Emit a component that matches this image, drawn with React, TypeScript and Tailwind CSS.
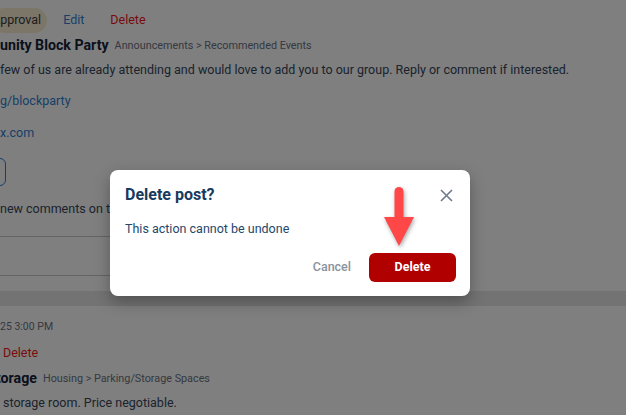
import React from "react";

const PostMeta = () => {
  return (
    <div className="pt-[8px]">
      <div className="flex h-[25px] items-center text-[12.5px]">
        <span className="-ml-[8px] flex h-[25px] items-center rounded-full bg-[#f9edd3] pr-[6px] text-[#3a3a3a]">
          Approval
        </span>
        <button className="ml-[16px] text-[#2f7fd0]">Edit</button>
        <button className="ml-[26px] text-[#f01818]">Delete</button>
      </div>
      <div className="mt-[1px] flex h-[24px] items-center gap-[6px]">
        <h3 className="text-[14.2px] font-bold text-[#152238]">unity Block Party</h3>
        <span className="text-[10.8px] text-[#6b7280]">
          Announcements &gt; Recommended Events
        </span>
      </div>
      <p className="flex h-[24px] items-center text-[12.5px] text-[#36465a]">
        few of us are already attending and would love to add you to our group. Reply or comment if interested.
      </p>
      <a className="mt-[7px] flex h-[24px] items-center text-[12.5px] text-[#2f7fd0]">g/blockparty</a>
      <a className="mt-[8px] flex h-[24px] items-center text-[12.5px] text-[#2f7fd0]">x.com</a>
      <button className="-ml-[90px] mt-[13px] block h-[28px] w-[96px] rounded-md border border-[#2f7fd0] text-[12.5px] text-[#2f7fd0]">
        Reply
      </button>
      <p className="mt-[11px] flex h-[24px] items-center text-[12.5px] text-[#36465a]">
        new comments on this post
      </p>
      <div className="-ml-[20px] mt-[15px] h-[40px] w-[400px] rounded-md border border-[#c4c9d0] bg-white"></div>
    </div>
  );
};

const SecondPost = () => {
  return (
    <div>
      <div className="mt-[15px] h-[15px] bg-[#e6e6e6]"></div>
      <p className="mt-[11px] flex h-[20px] items-center text-[10.5px] text-[#6b7280]">25 3:00 PM</p>
      <button className="ml-[3px] mt-[4px] flex h-[24px] items-center text-[12.5px] text-[#f01818]">Delete</button>
      <div className="-ml-[4px] mt-[2px] flex h-[24px] items-center gap-[6px]">
        <h3 className="text-[14.2px] font-bold text-[#152238]">torage</h3>
        <span className="text-[10.8px] text-[#6b7280]">Housing &gt; Parking/Storage Spaces</span>
      </div>
      <p className="ml-[3px] flex h-[24px] items-center text-[12.5px] text-[#36465a]">
        storage room. Price negotiable.
      </p>
    </div>
  );
};

const DeleteDialog = () => {
  return (
    <div className="absolute left-[110px] top-[170px] w-[360px] rounded-lg bg-white px-[15px] pb-[14px] pt-[14px] shadow-[0_6px_16px_rgba(0,0,0,0.3)]">
      <div className="flex h-[22px] items-center justify-between">
        <h2 className="text-[16px] font-bold text-[#173a5e]">Delete post?</h2>
        <button className="mr-[2px] text-[#6b7a8c]">
          <svg width="13" height="13" viewBox="0 0 13 13" fill="none">
            <path d="M1 1L12 12M12 1L1 12" stroke="currentColor" strokeWidth="1.6" />
          </svg>
        </button>
      </div>
      <p className="mt-[13px] flex h-[20px] items-center text-[12.5px] text-[#23476b]">
        This action cannot be undone
      </p>
      <div className="mt-[14px] flex items-center justify-end gap-[18px]">
        <button className="text-[12.5px] font-medium text-[#8a939c]">Cancel</button>
        <button className="mr-[-1px] h-[29px] w-[87px] rounded-md bg-[#b00000] text-[12.5px] font-bold text-white">
          Delete
        </button>
      </div>
    </div>
  );
};

const Arrow = () => {
  return (
    <svg
      className="absolute left-[380px] top-[184px] drop-shadow-[1px_2px_2px_rgba(0,0,0,0.35)]"
      width="40"
      height="66"
      viewBox="0 0 40 66"
    >
      <path d="M14.5 34V7.5a4.5 4.5 0 0 1 9 0V34z" fill="#ff4747" />
      <path d="M4 33H34L19 62z" fill="#ff4747" />
    </svg>
  );
};

export default function App() {
  return (
    <div className="relative h-[415px] w-[626px] overflow-hidden bg-white font-['Roboto',sans-serif]">
      <PostMeta />
      <SecondPost />
      <div className="absolute inset-0 bg-black/50"></div>
      <DeleteDialog />
      <Arrow />
    </div>
  );
}
